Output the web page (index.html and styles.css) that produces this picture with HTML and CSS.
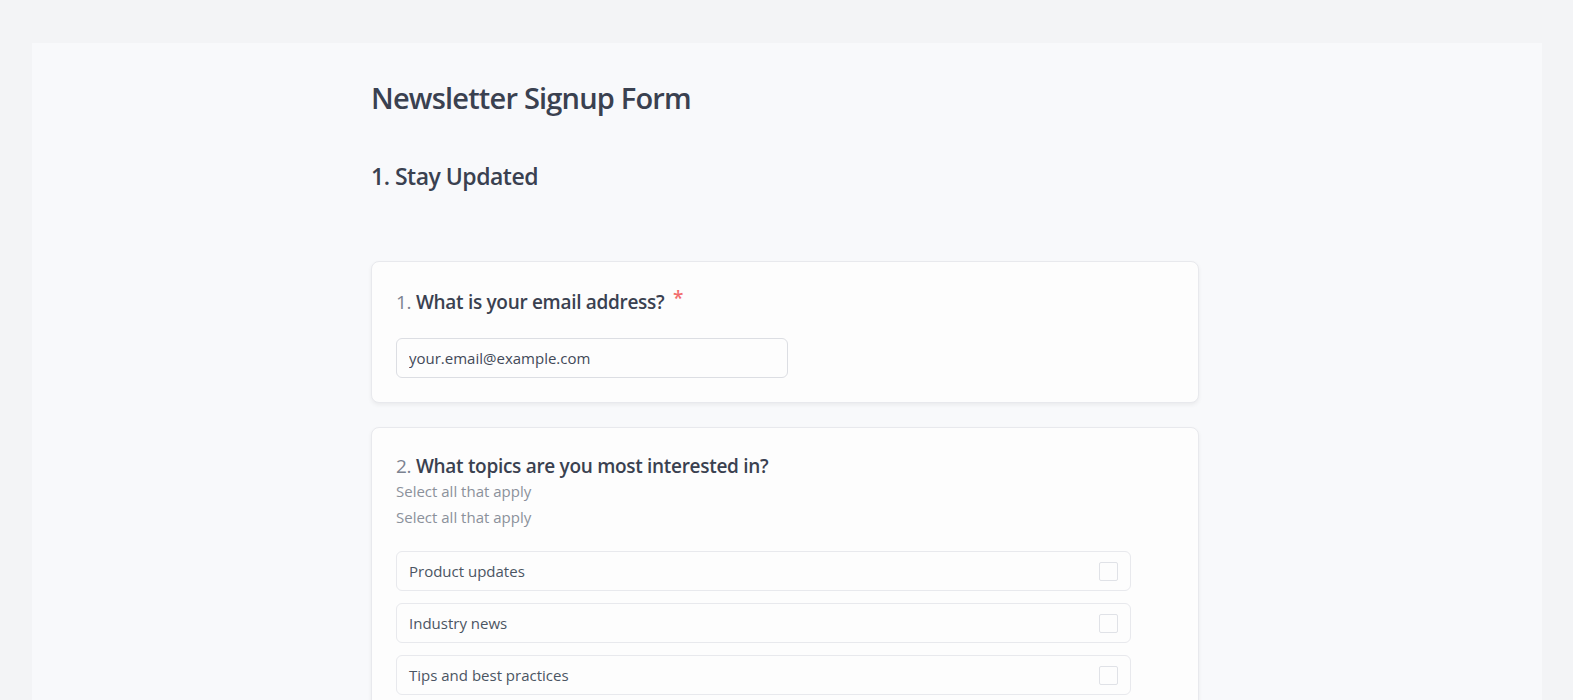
FILE: index.html
```html
<!DOCTYPE html>
<html lang="en">
<head>
    <meta charset="UTF-8">
    <title>Newsletter Signup Form</title>
    <link rel="stylesheet" href="styles.css">
</head>
<body>
    <div class="page">
        <div class="panel">
            <div class="content">
                <h1 class="form-title">Newsletter Signup Form</h1>
                <h2 class="section-title">1. Stay Updated</h2>

                <!-- question 1 -->
                <div class="card">
                    <div class="question first">
                        <span class="num">1.</span> What is your email address?
                        <span class="required">*</span>
                    </div>
                    <input class="text-input" type="text" value="your.email@example.com">
                </div>

                <!-- question 2 -->
                <div class="card">
                    <div class="question">
                        <span class="num">2.</span> What topics are you most interested in?
                    </div>
                    <p class="hint">Select all that apply</p>
                    <p class="hint second">Select all that apply</p>
                    <div class="options">
                        <label class="option">Product updates <input type="checkbox"></label>
                        <label class="option">Industry news <input type="checkbox"></label>
                        <label class="option">Tips and best practices <input type="checkbox"></label>
                    </div>
                </div>
            </div>
        </div>
    </div>
</body>
</html>
```

FILE: styles.css
```css
body {
    margin: 0;
    background: #ffffff;
    font-family: "Open Sans", "Noto Sans", Arial, sans-serif;
    color: #374151;
}
.page {
    margin-right: 15px;
    min-height: 100vh;
    background: #f3f4f6;
    padding: 43px 0 0 32px;
    box-sizing: border-box;
}
.panel {
    width: 1510px;
    min-height: 700px;
    box-sizing: border-box;
    background: #f8f9fb;
    padding: 35px 4px 0 0;
}
.content {
    max-width: 828px;
    margin: 0 auto;
}
.form-title {
    margin: 0;
    font-size: 29px;
    line-height: 40px;
    font-weight: 600;
    letter-spacing: -0.8px;
    color: #3a4150;
}
.section-title {
    margin: 42px 0 0;
    font-size: 23px;
    line-height: 32px;
    font-weight: 600;
    letter-spacing: -0.5px;
    color: #3a4150;
}
.card {
    background: #fdfdfd;
    border: 1px solid #e8e9ed;
    border-radius: 8px;
    box-shadow: 0 2px 4px rgba(0,0,0,0.06);
    padding: 24px;
    margin-top: 24px;
}
.section-title + .card { margin-top: 69px; }
.question {
    font-size: 19px;
    line-height: 28px;
    font-weight: 600;
    letter-spacing: -0.3px;
    color: #3a4150;
}
.question.first { padding-top: 2px; }
.num { color: #7b8290; font-weight: 500; }
.required {
    color: #f26d6d;
    margin-left: 4px;
    position: relative;
    top: -4px;
}
.text-input {
    display: block;
    margin-top: 22px;
    width: 392px;
    height: 40px;
    box-sizing: border-box;
    padding: 0 12px;
    border: 1px solid #dcdee3;
    border-radius: 6px;
    background: #fdfdfd;
    font-family: inherit;
    font-size: 15px;
    color: #424958;
}
.hint {
    margin: -1px 0 0;
    font-size: 15px;
    line-height: 24px;
    color: #8b919b;
}
.hint.second { margin-top: 2px; }
.options {
    margin-top: 22px;
    width: 735px;
    display: flex;
    flex-direction: column;
    gap: 12px;
}
.option {
    height: 40px;
    box-sizing: border-box;
    display: flex;
    align-items: center;
    justify-content: space-between;
    padding: 0 12px;
    border: 1px solid #e8e9ed;
    border-radius: 6px;
    font-size: 15px;
    color: #4b5563;
}
.option input {
    appearance: none;
    margin: 0;
    width: 19px;
    height: 19px;
    border: 1px solid #e0e2e7;
    border-radius: 2px;
    background: #fdfdfd;
}
```
